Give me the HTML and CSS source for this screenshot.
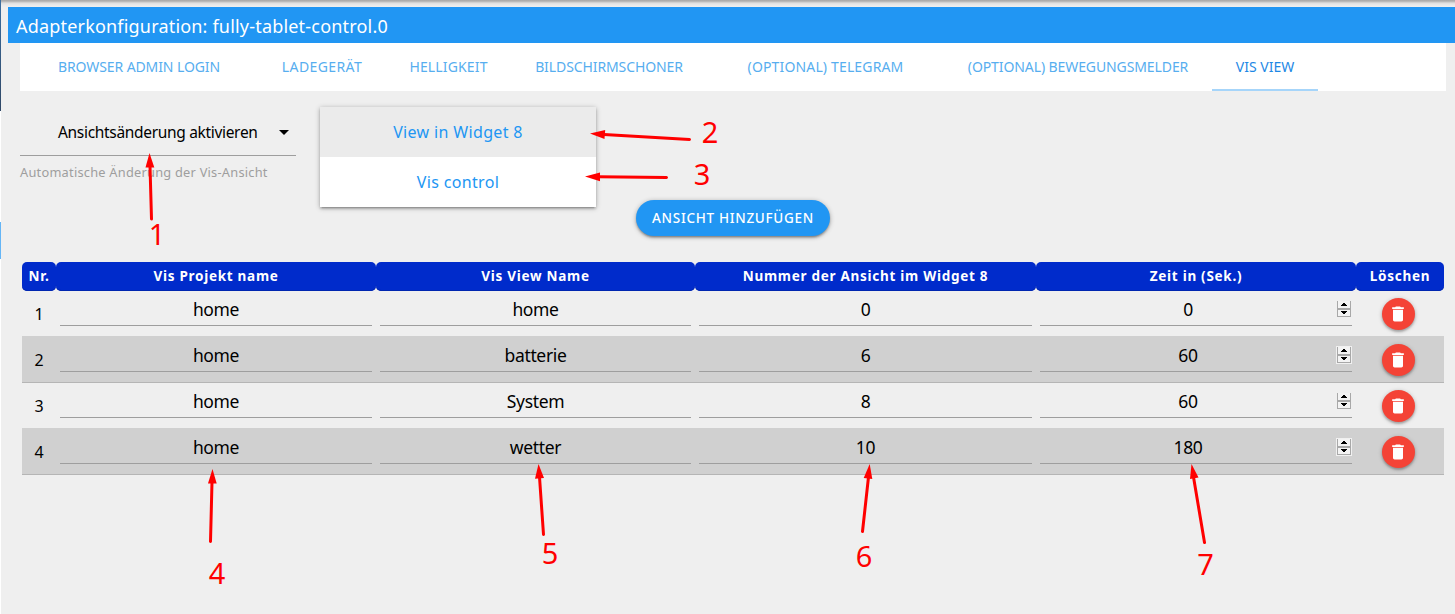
FILE: index.html
```html
<!DOCTYPE html>
<html lang="de">
<head>
<meta charset="utf-8">
<title>Adapterkonfiguration</title>
<link rel="stylesheet" href="styles.css">
</head>
<body>
<svg class="defs" width="0" height="0">
  <symbol id="trash" viewBox="0 0 24 24"><path d="M6 19c0 1.1.9 2 2 2h8c1.1 0 2-.9 2-2V7H6v12zM19 4h-3.5l-1-1h-5l-1 1H5v2h14V4z"/></symbol>
  <symbol id="spin" viewBox="0 0 14 16"><path fill="#f3f3f3" d="M0 0h14v16H0z"/><path fill="#a8a8a8" d="M0 0h1v16H0zM13 0h1v16h-1zM0 7h14v2H0zM0 15h14v1H0z"/><path fill="#000" d="M6 2h2v1h1v1h1v1H4V4h1V3h1zM4 10h6v1H9v1H8v1H6v-1H5v-1H4z"/></symbol>
</svg>
<div class="edge"><i class="edge-dark"></i><i class="edge-blue"></i></div>
<div class="page">
  <header class="title"><span>Adapterkonfiguration: fully-tablet-control.0</span></header>
  <nav class="tabs">
    <a><span class="t1">BROWSER ADMIN LOGIN</span></a><a><span class="t2">LADEGERÄT</span></a><a><span class="t3">HELLIGKEIT</span></a><a><span class="t4">BILDSCHIRMSCHONER</span></a><a><span class="t5">(OPTIONAL) TELEGRAM</span></a><a><span class="t6">(OPTIONAL) BEWEGUNGSMELDER</span></a><a class="active"><span class="t7">VIS VIEW</span></a>
  </nav>
  <section class="controls">
    <div class="field">
      <div class="select"><span>Ansichtsänderung aktivieren</span><svg width="10" height="5" viewBox="0 0 10 5"><path d="M0 0h10L5 5z"/></svg></div>
      <div class="help"><span>Automatische Änderung der Vis-Ansicht</span></div>
    </div>
    <ul class="menu"><li class="hover"><span>View in Widget 8</span></li><li><span>Vis control</span></li></ul>
    <button class="add"><span>ANSICHT HINZUFÜGEN</span></button>
  </section>
  <div class="table">
    <div class="row head"><div><span>Nr.</span></div><div><span>Vis Projekt name</span></div><div><span>Vis View Name</span></div><div><span>Nummer der Ansicht im Widget 8</span></div><div><span>Zeit in (Sek.)</span></div><div><span>Löschen</span></div></div>
    <div class="row"><div class="nr">1</div><div class="in">home</div><div class="in">home</div><div class="in">0</div><div class="in time">0<svg class="spin"><use href="#spin"/></svg></div><div class="del"><button><svg><use href="#trash"/></svg></button></div></div>
    <div class="row even"><div class="nr">2</div><div class="in">home</div><div class="in">batterie</div><div class="in">6</div><div class="in time">60<svg class="spin"><use href="#spin"/></svg></div><div class="del"><button><svg><use href="#trash"/></svg></button></div></div>
    <div class="row"><div class="nr">3</div><div class="in">home</div><div class="in">System</div><div class="in">8</div><div class="in time">60<svg class="spin"><use href="#spin"/></svg></div><div class="del"><button><svg><use href="#trash"/></svg></button></div></div>
    <div class="row even"><div class="nr">4</div><div class="in">home</div><div class="in">wetter</div><div class="in">10</div><div class="in time">180<svg class="spin"><use href="#spin"/></svg></div><div class="del"><button><svg><use href="#trash"/></svg></button></div></div>
  </div>
</div>
<svg class="notes" width="1455" height="614" viewBox="0 0 1455 614">
  <g class="shafts"><path d="M151.5 219L150 166"/><path d="M689.5 139.5L604 134.5"/><path d="M666.5 177.5L598 176.8"/><path d="M210.5 541.5L212 482"/><path d="M543.5 534.5L539.5 477"/><path d="M862.5 531.5L868.5 477"/><path d="M1204.5 542.5L1193.5 477"/></g>
  <path d="M149.500 153L154.300 167.500H145.500z"/>
  <path d="M590 133.500L605.200 130L604.500 139z"/>
  <path d="M585 176.500L600 172.500V181.200z"/>
  <path d="M212.500 469L216.700 483.500H208z"/>
  <path d="M538.500 464L544 478L535 478.800z"/>
  <path d="M869.700 464L872.300 479L863.700 478z"/>
  <path d="M1191.500 464L1198.500 477.500L1190 479z"/>
  <g class="digits"><text x="157" y="245">1</text><text x="710" y="143">2</text><text x="702" y="185">3</text><text x="217" y="584">4</text><text x="550" y="564">5</text><text x="864" y="567">6</text><text x="1205.500" y="575">7</text></g>
</svg>
</body>
</html>
```
FILE: styles.css
```css
* { box-sizing: border-box; }
body {
  margin: 0;
  width: 1455px;
  height: 614px;
  overflow: hidden;
  display: flex;
  position: relative;
  background: #fff;
  font-family: "Noto Sans", "Open Sans", sans-serif;
  color: #000;
}
span { white-space: nowrap; }
.defs { position: absolute; }
.edge { width: 1px; display: flex; flex-direction: column; gap: 111px; }
.edge-dark { height: 111px; background: linear-gradient(#3b6ea0, #2f4766); }
.edge-blue { height: 37px; background: #64b5f6; }
.page {
  width: 1454px;
  height: 614px;
  padding: 7px 0 0 7px;
  background: linear-gradient(#a9a9a9 0, #b0b0b0 1px, #c4c4c4 2px, #dedede 3px, #eaeaea 5px, #efefef 7px) 0 0 / 100% 7px no-repeat #efefef;
}
.title {
  height: 36px;
  padding: 1px 0 0 8px;
  line-height: 37px;
  font-size: 18px;
  letter-spacing: .19px;
  color: #fff;
  background: #2196f3;
}
.tabs {
  margin: 0 9px 0 12px;
  height: 48px;
  display: grid;
  grid-template-columns: 238px 128px 125px 196px 237px 268px 106px;
  background: #fff;
  color: #57aeef;
  font-size: 14px;
  line-height: 48px;
  text-align: center;
}
.tabs a { height: 48px; }
.t1, .t4, .t6 { letter-spacing: -.1px; }
.t2 { letter-spacing: .4px; }
.t3, .t5 { letter-spacing: .15px; }
.tabs .active { color: #1e88e5; border-bottom: 2px solid #a6d5fa; }
.controls { height: 171px; padding: 15px 0 0 12px; display: flex; }
.field { width: 276px; margin-right: 24px; }
.select {
  height: 50px;
  padding: 2px 7px 0 38px;
  display: flex;
  align-items: center;
  justify-content: space-between;
  border-bottom: 1px solid #9e9e9e;
  font-size: 15.5px;
  letter-spacing: -.32px;
}
.select svg { margin-top: 2px; }
.help { margin-top: 6px; font-size: 12.8px; letter-spacing: .24px; line-height: 20px; color: #9e9e9e; }
.menu {
  list-style: none;
  width: 276px;
  height: 100px;
  margin: 1px 40px 0 0;
  padding: 0;
  background: #fff;
  color: #2196f3;
  font-size: 16px;
  letter-spacing: .35px;
  line-height: 50px;
  text-align: center;
  box-shadow: 0 2px 2px rgba(0,0,0,.14), 0 3px 1px -2px rgba(0,0,0,.12), 0 1px 5px rgba(0,0,0,.3);
}
.menu .hover { background: #ebebeb; }
.add {
  width: 194px;
  height: 36px;
  margin-top: 94px;
  padding: 0;
  border: 0;
  border-radius: 18px;
  background: #2196f3;
  color: #fff;
  font: 500 13.5px/36px "Noto Sans", sans-serif;
  letter-spacing: .7px;
  box-shadow: 0 2px 2px rgba(0,0,0,.2), 0 3px 1px -2px rgba(0,0,0,.12), 0 1px 5px rgba(0,0,0,.3);
}
.table { margin-left: 14px; width: 1422px; }
.row { height: 45px; display: grid; grid-template-columns: 34px 320px 319px 341px 320px 88px; text-align: center; }
.even { height: 47px; padding-top: 1px; background: #d0d0d0; border-bottom: 1px solid #b5b5b5; }
.head { height: 29px; color: #fff; font-size: 13.5px; font-weight: 700; line-height: 28px; letter-spacing: .72px; }
.head div { background: #002bcb; border-radius: 5px; box-shadow: inset 0 -1px #0026b0; }
.nr { font-size: 16px; line-height: 46px; }
.in {
  position: relative;
  height: 35px;
  margin: 0 4px;
  border-bottom: 1px solid #9e9e9e;
  font-size: 17.5px;
  letter-spacing: -.35px;
  line-height: 36px;
}
.time { padding-right: 16px; }
.spin { position: absolute; right: 1px; top: 10px; width: 14px; height: 16px; }
.even .spin { outline: 1px solid #f0f0f0; }
.del { padding: 7px 0 0 26px; display: flex; }
.del button { width: 33px; height: 32px; padding: 0; border: 0; border-radius: 50%; background: #f44336; box-shadow: 0 2px 2px rgba(0,0,0,.18), 0 1px 4px rgba(0,0,0,.25); }
.del svg { display: block; width: 20px; height: 20px; margin: -1px 0 0 6px; fill: #fff; }
.notes { position: absolute; left: 0; top: 0; fill: red; }
.shafts { stroke: red; stroke-width: 3; stroke-linecap: round; }
.digits { font-size: 29px; text-anchor: middle; }
```
